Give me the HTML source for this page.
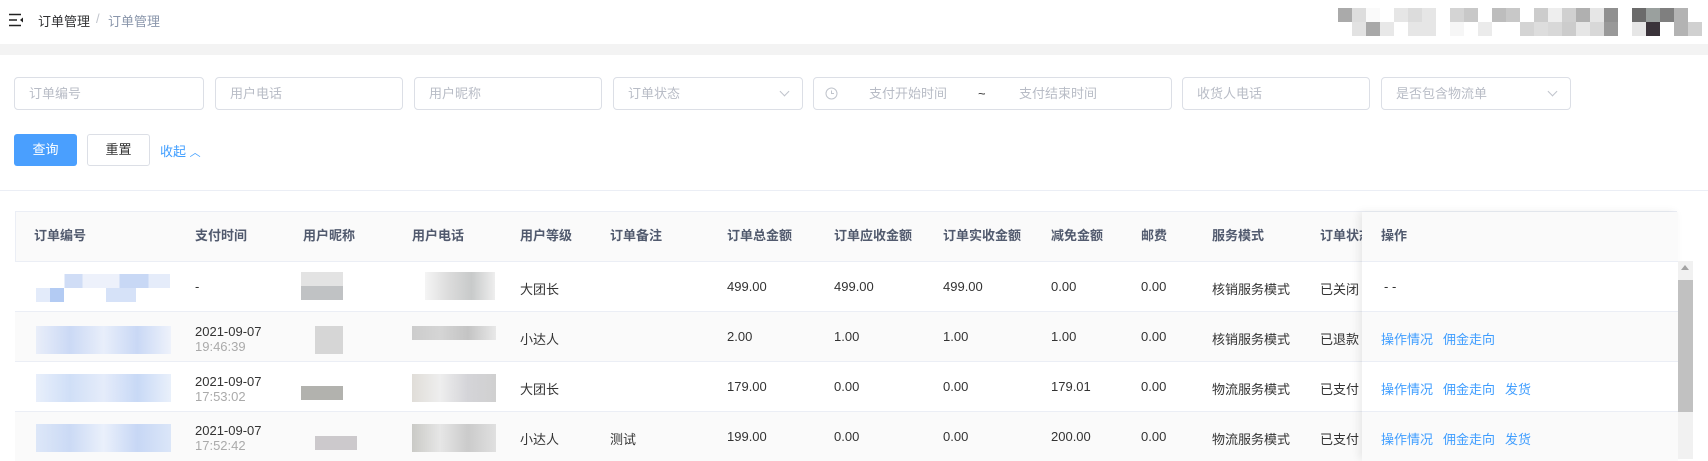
<!DOCTYPE html>
<html><head><meta charset="utf-8"><style>
*{margin:0;padding:0;box-sizing:border-box}
body{width:1708px;height:459px;overflow:hidden;background:#fff;font-family:"Liberation Sans","Noto Sans CJK SC",sans-serif;font-size:13px;color:#333;position:relative}
.a{position:absolute}
.inp{position:absolute;top:77px;height:33px;border:1px solid #dcdfe6;border-radius:4px;color:#b8bcc6;font-size:13px;line-height:31px;padding-left:14px;background:#fff}
.chev{position:absolute;right:14px;top:10px;width:7px;height:7px;border-right:1px solid #c0c4cc;border-bottom:1px solid #c0c4cc;transform:rotate(45deg)}
.th{position:absolute;top:211px;height:50px;line-height:50px;font-weight:bold;color:#515a6e;font-size:13px}
.row{position:absolute;left:15px;width:1662px;height:50px;border-top:1px solid #ebeef5}
.c{position:absolute;font-size:13px;color:#333;white-space:nowrap}
.lk{color:#409eff;margin-right:10px}
.px{position:absolute;width:14px;height:14px}
</style></head><body>
<div class="a" style="left:0;top:0;width:1708px;height:44px;background:#fff;box-shadow:0 1px 3px rgba(0,0,0,.08)"></div>
<div class="a" style="left:0;top:44px;width:1708px;height:11px;background:#f3f3f3"></div>
<svg class="a" style="left:9px;top:13px" width="15" height="14" viewBox="0 0 15 14"><path d="M0 1.5h12M0 7h8M0 12.5h12" stroke="#222" stroke-width="1.6"/><path d="M14 4.5v5l-3-2.5z" fill="#222"/></svg>
<div class="a" style="left:38px;top:11px;font-size:13px;color:#303133">订单管理</div>
<div class="a" style="left:96px;top:11px;font-size:13px;color:#c0c4cc">/</div>
<div class="a" style="left:108px;top:11px;font-size:13px;color:#8a96ab">订单管理</div>
<div id="ava"></div>
<div class="inp" style="left:14px;width:190px">订单编号</div>
<div class="inp" style="left:215px;width:188px">用户电话</div>
<div class="inp" style="left:414px;width:188px">用户昵称</div>
<div class="inp" style="left:613px;width:190px">订单状态<span class="chev"></span></div>
<div class="inp" style="left:813px;width:359px;padding-left:0">
<svg class="a" style="left:11px;top:9px" width="13" height="13" viewBox="0 0 13 13"><circle cx="6.5" cy="6.5" r="5.5" fill="none" stroke="#c0c4cc"/><path d="M6.5 3.5v3h2.5" stroke="#c0c4cc" fill="none"/></svg>
<span class="a" style="left:55px">支付开始时间</span><span class="a" style="left:164px;color:#333">~</span><span class="a" style="left:205px">支付结束时间</span></div>
<div class="inp" style="left:1182px;width:188px">收货人电话</div>
<div class="inp" style="left:1381px;width:190px">是否包含物流单<span class="chev"></span></div>
<div class="a" style="left:14px;top:134px;width:63px;height:32px;background:#4a9ffe;border-radius:3px;color:#fff;text-align:center;line-height:32px">查询</div>
<div class="a" style="left:87px;top:134px;width:63px;height:32px;border:1px solid #dcdfe6;border-radius:3px;color:#333;text-align:center;line-height:30px">重置</div>
<div class="a" style="left:160px;top:141px;color:#409eff">收起 <span style="font-size:11px">︿</span></div>
<div class="a" style="left:0;top:190px;width:1708px;height:1px;background:#ebeef5"></div>
<div class="a" style="left:15px;top:211px;width:1662px;height:250px;border:1px solid #ebeef5;border-bottom:none"></div>
<div class="a" style="left:16px;top:212px;width:1660px;height:49px;background:#fafafa"></div>
<div class="row" style="top:261px;background:#fff"></div>
<div class="row" style="top:311px;background:#fafafa"></div>
<div class="row" style="top:361px;background:#fff"></div>
<div class="row" style="top:411px;background:#fafafa"></div>
<div class="th" style="left:34px">订单编号</div><div class="th" style="left:195px">支付时间</div><div class="th" style="left:303px">用户昵称</div><div class="th" style="left:412px">用户电话</div><div class="th" style="left:520px">用户等级</div><div class="th" style="left:610px">订单备注</div><div class="th" style="left:727px">订单总金额</div><div class="th" style="left:834px">订单应收金额</div><div class="th" style="left:943px">订单实收金额</div><div class="th" style="left:1051px">减免金额</div><div class="th" style="left:1141px">邮费</div><div class="th" style="left:1212px">服务模式</div><div class="th" style="left:1320px">订单状态</div>
<div class="a" style="left:50px;top:274px;width:120px;height:14px;background:linear-gradient(90deg,#fff 0 12%,#d0ddf6 12% 27%,#edf1fb 27% 58%,#c8d8f5 58% 82%,#e5ecfa 82%)"></div>
<div class="a" style="left:36px;top:288px;width:100px;height:14px;background:linear-gradient(90deg,#e3ebfa 0 14%,#b3cbf3 14% 28%,#fff 28% 70%,#d6e2f8 70%)"></div>
<div class="a" style="left:36px;top:326px;width:135px;height:28px;background:linear-gradient(90deg,#e9eef9,#cbd9f5,#e8eefa,#c9d8f5,#eef2fb)"></div>
<div class="a" style="left:36px;top:374px;width:135px;height:28px;background:linear-gradient(90deg,#e8effb,#d0dff7,#e5ecfa,#c8d9f6,#e9f0fb)"></div>
<div class="a" style="left:36px;top:424px;width:135px;height:28px;background:linear-gradient(90deg,#dde7f8,#cbdaf5,#eaf0fb,#c7d7f5,#dbe6f8)"></div>
<div class="a" style="left:301px;top:272px;width:42px;height:28px;background:linear-gradient(#e3e3e3 50%,#c0c2c4 50%)"></div>
<div class="a" style="left:315px;top:326px;width:28px;height:28px;background:#d6d6d6"></div>
<div class="a" style="left:301px;top:386px;width:42px;height:14px;background:#b2b2ae"></div>
<div class="a" style="left:315px;top:436px;width:42px;height:14px;background:#ccc9cc"></div>
<div class="a" style="left:425px;top:272px;width:70px;height:28px;background:linear-gradient(90deg,#f5f5f5,#dcdcdc,#c8caca,#eee)"></div>
<div class="a" style="left:412px;top:326px;width:84px;height:14px;background:linear-gradient(90deg,#ccc,#d5d5d5,#c4c4c4,#e8e8e8)"></div>
<div class="a" style="left:412px;top:374px;width:84px;height:28px;background:linear-gradient(90deg,#e0ddd8,#eee,#d4d4d8,#d0d0d0)"></div>
<div class="a" style="left:412px;top:424px;width:84px;height:28px;background:linear-gradient(90deg,#cacac6,#e6e6e6,#cbcbcb,#e0e0e0)"></div>
<div class="c" style="left:195px;top:279px">-</div>
<div class="c" style="left:195px;top:324px">2021-09-07<br><span style="color:#aaa">19:46:39</span></div>
<div class="c" style="left:195px;top:374px">2021-09-07<br><span style="color:#aaa">17:53:02</span></div>
<div class="c" style="left:195px;top:423px">2021-09-07<br><span style="color:#aaa">17:52:42</span></div>
<div class="c" style="left:520px;top:279px">大团长</div><div class="c" style="left:520px;top:329px">小达人</div><div class="c" style="left:520px;top:379px">大团长</div><div class="c" style="left:520px;top:429px">小达人</div>
<div class="c" style="left:610px;top:429px">测试</div>
<div class="c" style="left:727px;top:279px">499.00</div><div class="c" style="left:834px;top:279px">499.00</div><div class="c" style="left:943px;top:279px">499.00</div><div class="c" style="left:1051px;top:279px">0.00</div><div class="c" style="left:1141px;top:279px">0.00</div><div class="c" style="left:1212px;top:279px">核销服务模式</div><div class="c" style="left:1320px;top:279px">已关闭</div>
<div class="c" style="left:727px;top:329px">2.00</div><div class="c" style="left:834px;top:329px">1.00</div><div class="c" style="left:943px;top:329px">1.00</div><div class="c" style="left:1051px;top:329px">1.00</div><div class="c" style="left:1141px;top:329px">0.00</div><div class="c" style="left:1212px;top:329px">核销服务模式</div><div class="c" style="left:1320px;top:329px">已退款</div>
<div class="c" style="left:727px;top:379px">179.00</div><div class="c" style="left:834px;top:379px">0.00</div><div class="c" style="left:943px;top:379px">0.00</div><div class="c" style="left:1051px;top:379px">179.01</div><div class="c" style="left:1141px;top:379px">0.00</div><div class="c" style="left:1212px;top:379px">物流服务模式</div><div class="c" style="left:1320px;top:379px">已支付</div>
<div class="c" style="left:727px;top:429px">199.00</div><div class="c" style="left:834px;top:429px">0.00</div><div class="c" style="left:943px;top:429px">0.00</div><div class="c" style="left:1051px;top:429px">200.00</div><div class="c" style="left:1141px;top:429px">0.00</div><div class="c" style="left:1212px;top:429px">物流服务模式</div><div class="c" style="left:1320px;top:429px">已支付</div>
<div class="a" style="left:1362px;top:212px;width:316px;height:247px;background:#fff;box-shadow:-3px 0 8px rgba(0,0,0,.08)"></div>
<div class="a" style="left:1362px;top:212px;width:316px;height:49px;background:#fafafa"></div>
<div class="a" style="left:1362px;top:311px;width:316px;height:50px;background:#fafafa;border-top:1px solid #ebeef5"></div>
<div class="a" style="left:1362px;top:361px;width:316px;height:1px;background:#ebeef5"></div>
<div class="a" style="left:1362px;top:411px;width:316px;height:50px;background:#fafafa;border-top:1px solid #ebeef5"></div>
<div class="a" style="left:1362px;top:261px;width:316px;height:1px;background:#ebeef5"></div>
<div class="th" style="left:1381px">操作</div>
<div class="c" style="left:1384px;top:279px">- -</div>
<div class="c" style="left:1381px;top:329px"><span class="lk">操作情况</span><span class="lk">佣金走向</span></div>
<div class="c" style="left:1381px;top:379px"><span class="lk">操作情况</span><span class="lk">佣金走向</span><span class="lk">发货</span></div>
<div class="c" style="left:1381px;top:429px"><span class="lk">操作情况</span><span class="lk">佣金走向</span><span class="lk">发货</span></div>
<div class="a" style="left:1678px;top:261px;width:15px;height:198px;background:#f1f1f1"></div>
<div class="a" style="left:1681px;top:265px;width:0;height:0;border-left:4px solid transparent;border-right:4px solid transparent;border-bottom:5px solid #a3a3a3"></div>
<div class="a" style="left:1678px;top:280px;width:15px;height:132px;background:#c1c1c1"></div>
<script>
var r1="aaa ddd fafafa fff e6e6e6 dcdcdc e6e6e6 fff d4d4d4 c8c8c8 fff bdbdbd c8c8c8 fff ccc eee d0d0d0 b0b0b0 e6e6e6 909090 fff 6b6b6b 9aa09e 7f7f7f b3b3b3 fff".split(" ");
var r2="fff e2e2e2 a8a8a8 e8e8e8 fff e6e6e6 e6e6e6 fff f6f6f6 fff ebebeb fff fff d4d4d4 ddd d8d8d8 ccc e6e6e6 d8d8d8 999 fff e6e6e6 3a333a fff b3b3b3 d0d0d0".split(" ");
var h="";for(var i=0;i<26;i++){h+='<div class="px" style="left:'+(1338+i*14)+'px;top:8px;background:#'+r1[i]+'"></div><div class="px" style="left:'+(1338+i*14)+'px;top:22px;background:#'+r2[i]+'"></div>';}
document.getElementById("ava").innerHTML=h;
</script>
</body></html>
